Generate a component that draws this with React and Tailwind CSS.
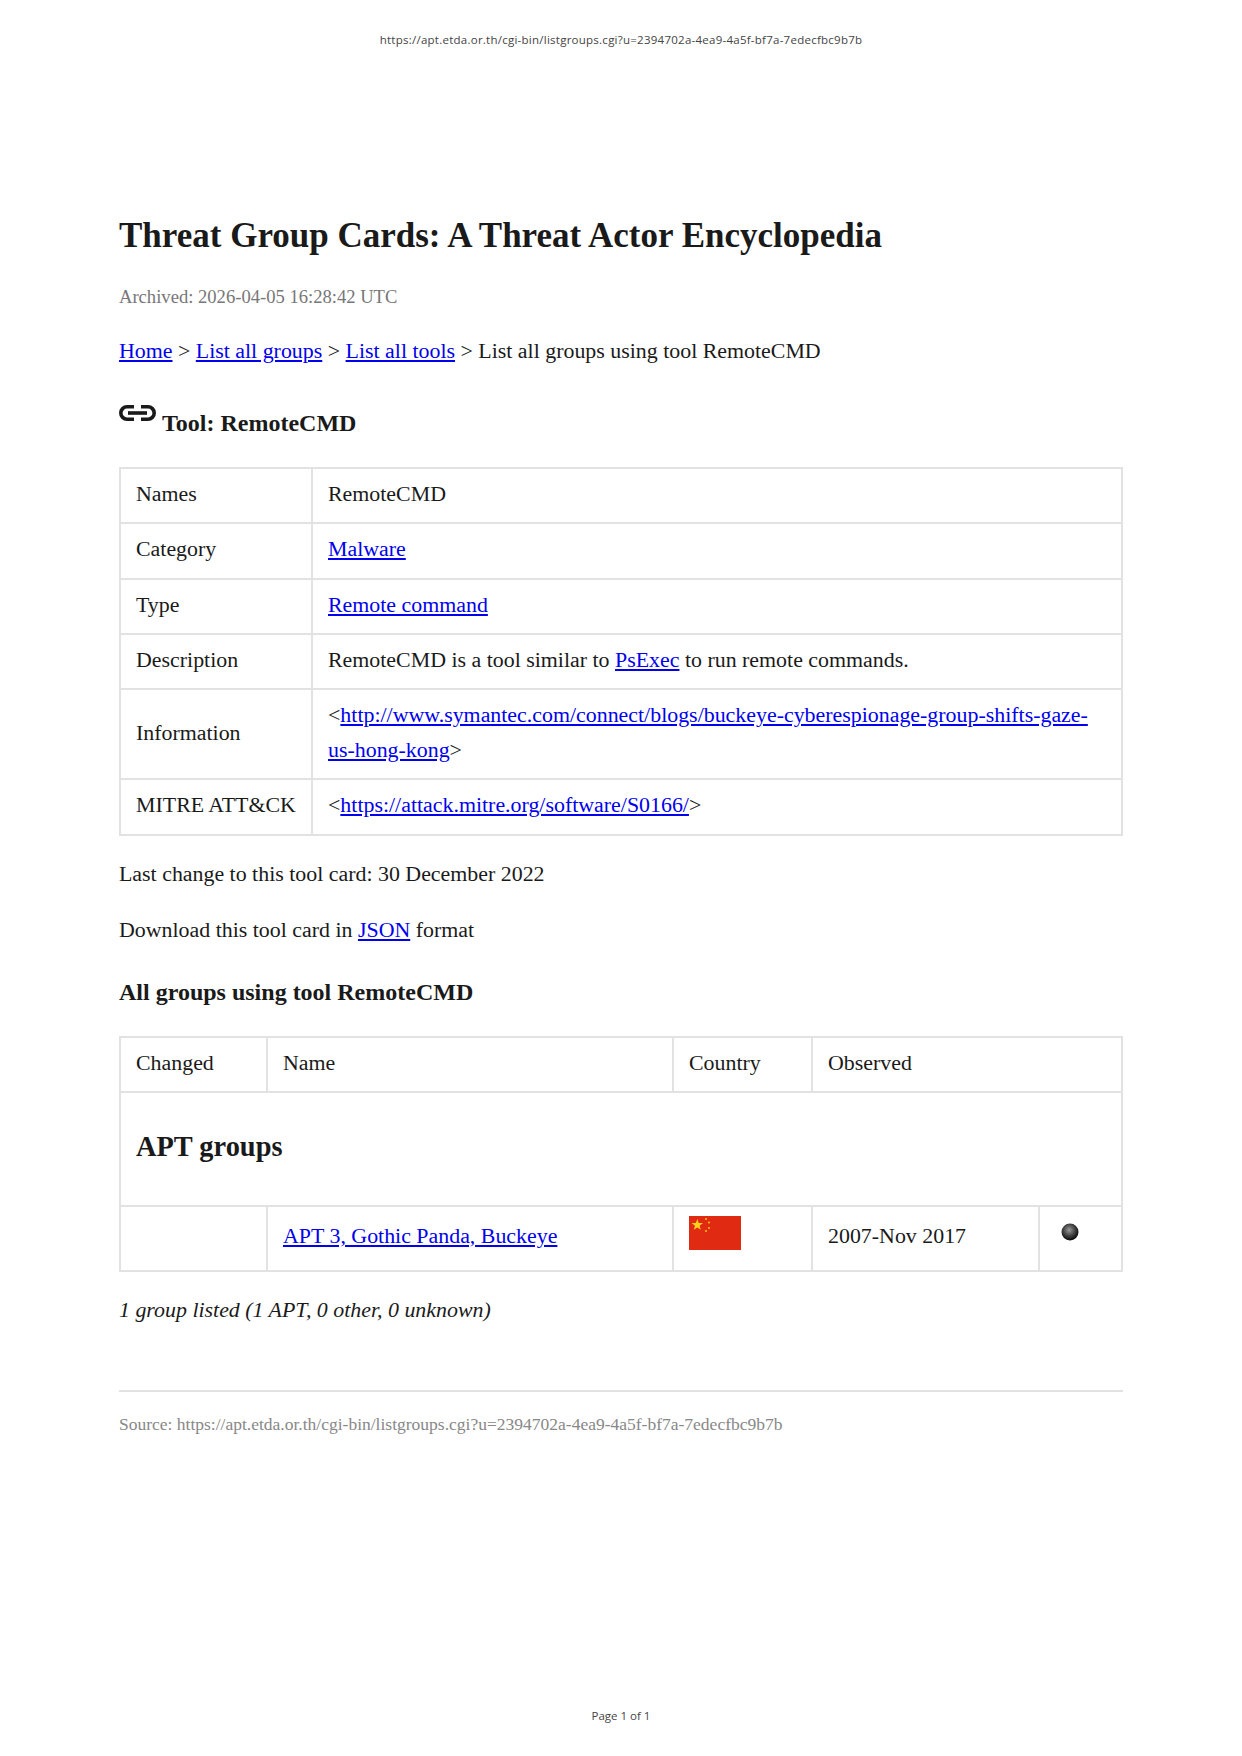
import React from "react";

function A({ children }) {
  return <a href="#" className="text-[#0000ee] underline">{children}</a>;
}

function Td({ children, className = "", colSpan }) {
  return <td colSpan={colSpan} className={`border-2 border-[#e2e2e2] px-[15px] pt-[7px] pb-[11px] ${className}`}>{children}</td>;
}

function LinkIcon() {
  return (
    <svg viewBox="0 0 37 16" className="w-[37px] h-[16px] inline-block align-[10px] mr-[6px]" fill="none" stroke="#1a1a1a" strokeWidth="3.6">
      <path d="M15 1.8H8a6.2 6.2 0 0 0 0 12.4H15" />
      <path d="M22 1.8h7a6.2 6.2 0 0 1 0 12.4h-7" />
      <path d="M9 8h19" />
    </svg>
  );
}

function Flag() {
  return (
    <svg viewBox="0 0 52 34" className="w-[52px] h-[34px]">
      <rect width="52" height="34" fill="#e12a12" />
      <path d="M8.3 3l1.4 4 4.3.1-3.4 2.6 1.2 4.1-3.5-2.4-3.5 2.4 1.2-4.1-3.4-2.6 4.3-.1z" fill="#ffd21f" />
      <circle cx="17" cy="3" r="1.1" fill="#f9b71a" />
      <circle cx="20" cy="6.5" r="1.1" fill="#f9b71a" />
      <circle cx="20" cy="12" r="1.1" fill="#f9b71a" />
      <circle cx="17" cy="15" r="1.1" fill="#f9b71a" />
    </svg>
  );
}

function Ball() {
  return (
    <svg viewBox="0 0 18 18" className="w-[18px] h-[18px] ml-[6px]">
      <defs>
        <radialGradient id="ball" cx="0.45" cy="0.38" r="0.62">
          <stop offset="0" stopColor="#9a9a9a" />
          <stop offset="0.5" stopColor="#4a4a4a" />
          <stop offset="1" stopColor="#050505" />
        </radialGradient>
      </defs>
      <circle cx="9" cy="9" r="8.5" fill="url(#ball)" />
    </svg>
  );
}

const toolRows = [
  ["Names", "RemoteCMD"],
  ["Category", <A>Malware</A>],
  ["Type", <A>Remote command</A>],
  ["Description", <>RemoteCMD is a tool similar to <A>PsExec</A> to run remote commands.</>],
  ["Information", <>&lt;<A>http://www.symantec.com/connect/blogs/buckeye-cyberespionage-group-shifts-gaze-us-hong-kong</A>&gt;</>],
  ["MITRE ATT&CK", <>&lt;<A>https://attack.mitre.org/software/S0166/</A>&gt;</>],
];

export default function App() {
  return (
    <div className="relative h-[1756px] bg-white text-[#1a1a1a] font-['Liberation_Serif',serif] text-[21.9px] leading-[35.2px]">
      <div className="pt-[32px] text-center font-['Open_Sans',sans-serif] text-[11.5px] tracking-[0.25px] leading-[16px] text-[#444]">
        https://apt.etda.or.th/cgi-bin/listgroups.cgi?u=2394702a-4ea9-4a5f-bf7a-7edecfbc9b7b
      </div>

      <div className="px-[119px] pt-[165px]">
        <h1 className="text-[35px] leading-[46px] font-bold">Threat Group Cards: A Threat Actor Encyclopedia</h1>
        <p className="mt-[22px] text-[18.6px] leading-[32px] text-[#777]">Archived: 2026-04-05 16:28:42 UTC</p>
        <p className="mt-[20px]">
          <A>Home</A> &gt; <A>List all groups</A> &gt; <A>List all tools</A> &gt; List all groups using tool RemoteCMD
        </p>
        <h2 className="mt-[36px] font-bold text-[24px] leading-[38px]"><LinkIcon />Tool: RemoteCMD</h2>

        <table className="mt-[25px] w-full border-collapse">
          <tbody>
            {toolRows.map(([label, value]) => (
              <tr key={label}>
                <Td className="w-[192px] whitespace-nowrap">{label}</Td>
                <Td>{value}</Td>
              </tr>
            ))}
          </tbody>
        </table>

        <p className="mt-[20px]">Last change to this tool card: 30 December 2022</p>
        <p className="mt-[21px]">Download this tool card in <A>JSON</A> format</p>
        <h3 className="mt-[26px] font-bold text-[24px] leading-[38px]">All groups using tool RemoteCMD</h3>

        <table className="mt-[25px] w-full border-collapse">
          <tbody>
            <tr>
              <Td className="w-[147px]">Changed</Td>
              <Td className="w-[406px]">Name</Td>
              <Td className="w-[139px]">Country</Td>
              <Td colSpan={2}>Observed</Td>
            </tr>
            <tr>
              <td colSpan={5} className="border-2 border-[#e2e2e2] px-[15px] pt-[26px] pb-[30px] font-bold text-[28.4px] leading-[56px]">APT groups</td>
            </tr>
            <tr>
              <Td />
              <Td className="!pb-[13px]"><A>APT 3, Gothic Panda, Buckeye</A></Td>
              <Td className="!pt-[9px] !pb-[20px]"><Flag /></Td>
              <Td className="w-[227px] !pb-[13px]">2007-Nov 2017</Td>
              <Td className="align-top !pt-[16px]"><Ball /></Td>
            </tr>
          </tbody>
        </table>

        <p className="mt-[20px] italic">1 group listed (1 APT, 0 other, 0 unknown)</p>
        <div className="mt-[63px] border-t-2 border-[#e2e2e2]" />
        <p className="mt-[17px] text-[17.5px] leading-[30px] text-[#888]">
          Source: https://apt.etda.or.th/cgi-bin/listgroups.cgi?u=2394702a-4ea9-4a5f-bf7a-7edecfbc9b7b
        </p>
      </div>

      <div className="absolute bottom-[32px] inset-x-0 text-center font-['Open_Sans',sans-serif] text-[11.5px] leading-[16px] text-[#444]">
        Page 1 of 1
      </div>
    </div>
  );
}
